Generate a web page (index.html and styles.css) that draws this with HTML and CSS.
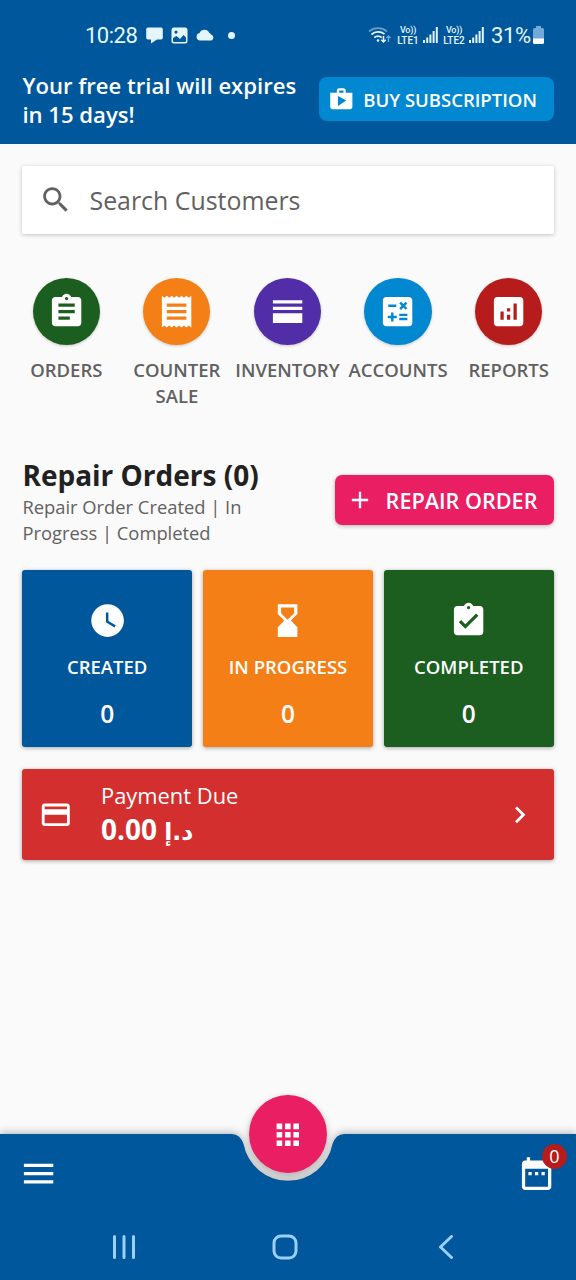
FILE: index.html
```html
<!DOCTYPE html>
<html lang="en">
<head>
<meta charset="utf-8">
<title>Repair Orders</title>
<link rel="stylesheet" href="styles.css">
</head>
<body>
<div class="screen">
  <header class="header">
    <div class="status">
      <div class="status-left">
        <span class="clock">10:28</span>
        <svg class="s-chat" width="17" height="17" viewBox="0 0 17 17"><path d="M2 .5h13a1.800 1.800 0 0 1 1.800 1.800v8.500a1.800 1.800 0 0 1-1.800 1.800h-4L5 16.500v-3.900H2A1.800 1.800 0 0 1 .2 10.800V2.300A1.800 1.800 0 0 1 2 .5z"/></svg>
        <svg class="s-photo" width="17" height="17" viewBox="0 0 17 17"><path fill-rule="evenodd" d="M3 .5h11A2.500 2.500 0 0 1 16.500 3v11a2.500 2.500 0 0 1-2.500 2.500H3A2.500 2.500 0 0 1 .5 14V3A2.500 2.500 0 0 1 3 .5zM2 11v3a1 1 0 0 0 1 1h11a1 1 0 0 0 1-1v-3.500L12.500 8 9 12 5.500 9zM5 3.500a1.600 1.600 0 1 0 0 3.200 1.600 1.600 0 0 0 0-3.200z"/></svg>
        <svg class="s-cloud" width="19" height="12" viewBox="0 0 19 12"><path d="M4 11.500a3.800 3.800 0 0 1-.4-7.500A5.300 5.300 0 0 1 13.300 4a3 3 0 0 1 1.700 1.500A3.200 3.200 0 0 1 15.500 11.500z"/></svg>
        <span class="dot"></span>
      </div>
      <div class="status-right">
        <svg class="s-wifi" width="24" height="18" viewBox="0 0 24 18" fill="none" stroke="#e4f6fb" stroke-width="1.700"><path opacity=".45" d="M1 5.500a14 14 0 0 1 18 0"/><path d="M3.500 8.500a10 10 0 0 1 13-.3M6.300 11.500a6 6 0 0 1 7.400 0"/><circle cx="10" cy="14.500" r="1.300" fill="#e4f6fb" stroke="none"/><path stroke-width="1.500" d="M15.500 10v6m-2.200-2.200 2.200 2.200 2.200-2.200"/><path stroke-width="1.400" opacity=".5" d="M20.500 16v-6m-2 2 2-2 2 2"/></svg>
        <span class="lte"><span class="vo">Vo))</span><span>LTE1</span></span>
        <svg class="bars" width="15" height="16" viewBox="0 0 15 16"><path d="M0 13h2v3H0zM3.200 10.500h2V16h-2zM6.400 7.500h2V16h-2zM9.600 4h2v12h-2zM12.800 0h2v16h-2z"/></svg>
        <span class="lte"><span class="vo">Vo))</span><span>LTE2</span></span>
        <svg class="bars" width="15" height="16" viewBox="0 0 15 16"><path d="M0 13h2v3H0zM3.200 10.500h2V16h-2zM6.400 7.500h2V16h-2zM9.600 4h2v12h-2zM12.800 0h2v16h-2z"/></svg>
        <span class="percent">31%</span>
        <svg class="battery" width="11" height="18" viewBox="0 0 11 18"><path fill="#73a9d6" d="M3 0h5v2h1.500A1.500 1.500 0 0 1 11 3.500V13H0V3.500A1.500 1.500 0 0 1 1.500 2H3z"/><path fill="#fff" d="M0 12.500h11v4A1.500 1.500 0 0 1 9.500 18h-8A1.500 1.500 0 0 1 0 16.500z"/></svg>
      </div>
    </div>
    <div class="trial">
      <p class="trial-text">Your free trial will expires<br>in 15 days!</p>
      <button class="buy"><svg width="26.600" height="26.600" viewBox="0 0 24 24"><path d="M16 6V4c0-1.110-.89-2-2-2h-4c-1.110 0-2 .89-2 2v2H2v13c0 1.110.89 2 2 2h16c1.110 0 2-.89 2-2V6h-6zm-6-2h4v2h-4V4zM9 18V9l7.500 4L9 18z"/></svg><span>BUY SUBSCRIPTION</span></button>
    </div>
  </header>

  <main class="content">
    <div class="search">
      <svg width="33.600" height="33.600" viewBox="0 0 24 24"><path d="M15.500 14h-.79l-.28-.27C15.410 12.590 16 11.110 16 9.500 16 5.910 13.090 3 9.500 3S3 5.910 3 9.500 5.910 16 9.500 16c1.610 0 3.090-.59 4.230-1.570l.27.28v.79l5 4.990L20.490 19l-4.990-5zm-6 0C7.010 14 5 11.990 5 9.500S7.010 5 9.500 5 14 7.010 14 9.500 11.990 14 9.500 14z"/></svg>
      <span>Search Customers</span>
    </div>

    <nav class="shortcuts">
      <a class="shortcut"><span class="disc green"><svg viewBox="0 0 24 24"><path d="M19 3h-4.180C14.400 1.840 13.300 1 12 1c-1.300 0-2.400.84-2.820 2H5c-1.100 0-2 .9-2 2v14c0 1.100.9 2 2 2h14c1.100 0 2-.9 2-2V5c0-1.100-.9-2-2-2zm-7 0c.55 0 1 .45 1 1s-.45 1-1 1-1-.45-1-1 .45-1 1-1zm2 14H7v-2h7v2zm3-4H7v-2h10v2zm0-4H7V7h10v2z"/></svg></span><span class="name">ORDERS</span></a>
      <a class="shortcut"><span class="disc orange"><svg viewBox="0 0 24 24"><path d="M18 17H6v-2h12v2zm0-4H6v-2h12v2zm0-4H6V7h12v2zM3 21.700l1.500-1.200L6 21.700l1.500-1.200L9 21.700l1.500-1.200L12 21.700l1.500-1.200L15 21.700l1.500-1.200L18 21.700l1.500-1.200L21 21.700V2.300l-1.500 1.200L18 2.300l-1.500 1.200L15 2.300l-1.500 1.200L12 2.300l-1.500 1.200L9 2.300 7.500 3.500 6 2.300 4.500 3.500 3 2.300z"/></svg></span><span class="name">COUNTER<br>SALE</span></a>
      <a class="shortcut"><span class="disc purple"><svg viewBox="0 0 24 24"><path d="M3 19h18v-6H3v6zm0-8h18V9H3v2zm0-6v2h18V5H3z"/></svg></span><span class="name">INVENTORY</span></a>
      <a class="shortcut"><span class="disc sky"><svg viewBox="0 0 24 24"><path d="M19 3H5c-1.100 0-2 .9-2 2v14c0 1.100.9 2 2 2h14c1.100 0 2-.9 2-2V5c0-1.100-.9-2-2-2zm-5.970 4.060L14.090 6l1.410 1.410L16.910 6l1.060 1.060-1.410 1.410 1.410 1.410-1.060 1.060-1.410-1.400-1.410 1.410-1.060-1.060 1.410-1.410-1.410-1.420zM6.250 7.720h5v1.500h-5v-1.500zM11.500 16h-2v2H8v-2H6v-1.500h2v-2h1.500v2h2V16zm6.500 1.250h-5v-1.500h5v1.500zm0-2.500h-5v-1.500h5v1.500z"/></svg></span><span class="name">ACCOUNTS</span></a>
      <a class="shortcut"><span class="disc red"><svg viewBox="0 0 24 24"><path d="M19 3H5c-1.100 0-2 .9-2 2v14c0 1.100.9 2 2 2h14c1.100 0 2-.9 2-2V5c0-1.100-.9-2-2-2zM9 17H7v-5h2v5zm4 0h-2v-3h2v3zm0-5h-2v-2h2v2zm4 5h-2V7h2v10z"/></svg></span><span class="name">REPORTS</span></a>
    </nav>

    <section class="orders-head">
      <div>
        <h1>Repair Orders (0)</h1>
        <p class="sub">Repair Order Created | In<br>Progress | Completed</p>
      </div>
      <button class="add"><svg width="28" height="28" viewBox="0 0 24 24"><path d="M19 13h-6v6h-2v-6H5v-2h6V5h2v6h6v2z"/></svg><span>REPAIR ORDER</span></button>
    </section>

    <section class="cards">
      <div class="card blue"><svg viewBox="0 0 24 24"><path d="M12 2C6.500 2 2 6.500 2 12s4.500 10 10 10 10-4.500 10-10S17.500 2 12 2zm4.200 14.200L11 13V7h1.500v5.200l4.500 2.700-.8 1.300z"/></svg><span class="label">CREATED</span><span class="count">0</span></div>
      <div class="card orange"><svg viewBox="0 0 24 24"><path d="M6 2v6h.01L6 8.010 10 12l-4 4 .01.01H6V22h12v-5.990h-.01L18 16l-4-4 4-3.990-.01-.01H18V2H6zM16 7.500 12 11.500 8 7.500V4h8z"/></svg><span class="label">IN PROGRESS</span><span class="count">0</span></div>
      <div class="card green"><svg viewBox="0 0 24 24"><path d="M19 3h-4.180C14.400 1.840 13.300 1 12 1s-2.400.84-2.820 2H5c-1.100 0-2 .9-2 2v14c0 1.100.9 2 2 2h14c1.100 0 2-.9 2-2V5c0-1.100-.9-2-2-2zm-7 0c.55 0 1 .45 1 1s-.45 1-1 1-1-.45-1-1 .45-1 1-1zm-2 14l-4-4 1.410-1.410L10 14.170l6.590-6.590L18 9l-8 8z"/></svg><span class="label">COMPLETED</span><span class="count">0</span></div>
    </section>

    <section class="due">
      <svg width="33.600" height="33.600" viewBox="0 0 24 24"><path d="M20 4H4c-1.110 0-1.990.89-1.990 2L2 18c0 1.110.89 2 2 2h16c1.110 0 2-.89 2-2V6c0-1.110-.89-2-2-2zm0 14H4v-6h16v6zm0-10H4V6h16v2z"/></svg>
      <div class="due-text">
        <span class="due-label">Payment Due</span>
        <span class="amount"><b>0.00</b> <span class="currency" dir="rtl" lang="ar">د.إ</span></span>
      </div>
      <svg width="33.600" height="33.600" viewBox="0 0 24 24"><path d="M10 6 8.590 7.410 13.170 12l-4.580 4.590L10 18l6-6z"/></svg>
    </section>
  </main>

  <footer class="bottom">
    <svg class="bar-shape" width="576" height="146" viewBox="0 0 576 146"><path d="M0 0H232Q240 0 243.500 10A45.300 45.300 0 0 0 332.500 10Q336 0 344 0H576V146H0z"/></svg>
    <button class="fab"><svg width="33.600" height="33.600" viewBox="0 0 24 24"><path d="M4 8h4V4H4v4zm6 12h4v-4h-4v4zm-6 0h4v-4H4v4zm0-6h4v-4H4v4zm6 0h4v-4h-4v4zm6-10v4h4V4h-4zm-6 4h4V4h-4v4zm6 6h4v-4h-4v4zm0 6h4v-4h-4v4z"/></svg></button>
    <div class="tools">
      <svg width="39.200" height="39.200" viewBox="0 0 24 24"><path d="M3 18h18v-2H3v2zm0-5h18v-2H3v2zm0-7v2h18V6H3z"/></svg>
      <span class="calendar">
        <svg width="39.200" height="39.200" viewBox="0 0 24 24"><path d="M9 11H7v2h2v-2zm4 0h-2v2h2v-2zm4 0h-2v2h2v-2zm2-7h-1V2h-2v2H8V2H6v2H5c-1.110 0-1.990.9-1.990 2L3 20c0 1.100.89 2 2 2h14c1.100 0 2-.9 2-2V6c0-1.100-.9-2-2-2zm0 16H5V9h14v11z"/></svg>
        <span class="badge">0</span>
      </span>
    </div>
    <div class="system">
      <svg width="24" height="24" viewBox="0 0 24 24"><path d="M2.500 1.500v21M12 1.500v21M21.500 1.500v21"/></svg>
      <svg width="26" height="26" viewBox="0 0 26 26"><rect x="2" y="2" width="22" height="22" rx="7"/></svg>
      <svg width="14" height="24" viewBox="0 0 14 24"><path d="M12.500 1.500 1.500 12l11 10.500"/></svg>
    </div>
  </footer>
</div>
</body>
</html>
```

FILE: styles.css
```css
* { box-sizing: border-box; }
body {
  margin: 0;
  background: #fafafa;
  font-family: "Open Sans", "Noto Sans", sans-serif;
}
p, h1 { margin: 0; }
svg { display: block; flex: none; fill: currentColor; }
button { border: 0; padding: 0; font: inherit; color: inherit; }

.screen { display: flex; flex-direction: column; width: 576px; height: 1280px; overflow: hidden; }
.blue { background: #01579b; }
.green { background: #1b5e20; }
.orange { background: #f57f17; }
.purple { background: #512da8; }
.sky { background: #0288d1; }
.red { background: #b71c1c; }

.header { height: 144px; background: #01579b; color: #fff; }
.status {
  display: flex; justify-content: space-between; align-items: center;
  height: 70px; padding: 0 32px 0 85px;
  color: #e4f6fb; font-family: Roboto, sans-serif;
}
.status-left, .status-right { display: flex; align-items: center; }
.clock { width: 61px; font-size: 22px; letter-spacing: -.5px; }
.s-photo { margin-left: 8px; }
.s-cloud { margin-left: 8px; }
.dot { width: 7px; height: 7px; margin-left: 13px; border-radius: 50%; background: #e4f6fb; }
.lte { display: flex; flex-direction: column; align-items: center; width: 22px; padding-top: 1px; font-size: 10px; line-height: 10.5px; font-weight: 500; }
.vo { font-size: 9px; letter-spacing: -.2px; }
.s-wifi { margin-right: 5px; fill: none; }
.bars { margin: 0 5px 0 4px; }
.percent { width: 42px; margin-left: 2px; font-size: 22px; letter-spacing: -.4px; }

.trial { display: flex; justify-content: space-between; align-items: flex-start; padding: 1px 22.4px 0; }
.trial-text { font-size: 22.1px; line-height: 29px; font-weight: 600; white-space: nowrap; }
.buy {
  display: flex; align-items: center; gap: 9px;
  width: 235px; height: 44px; margin-top: 6px; padding-left: 9px;
  border-radius: 8px; background: #0288d1;
  font-size: 18.5px; font-weight: 600; white-space: nowrap;
}

.content { flex: 1; padding: 22.4px 22.4px 0; }
.search {
  display: flex; align-items: center; gap: 17px; height: 67.2px; padding-left: 16.5px;
  background: #fff; border-radius: 2px; box-shadow: 0 1px 4px rgba(0, 0, 0, .22);
  color: #616161; font-size: 24.9px;
}
.shortcuts { display: grid; grid-template-columns: repeat(5, 110.6px); margin: 44.4px -11.4px 0; height: 131px; }
.shortcut { display: flex; flex-direction: column; align-items: center; color: #616161; }
.disc {
  display: flex; align-items: center; justify-content: center;
  width: 67.2px; height: 67.2px; border-radius: 50%; color: #fff;
  box-shadow: 0 1px 3px rgba(0, 0, 0, .2);
}
.disc svg { width: 39.2px; height: 39.2px; }
.name { margin-top: 11.5px; font-size: 18.5px; line-height: 26px; font-weight: 600; text-align: center; white-space: nowrap; }

.orders-head { display: flex; justify-content: space-between; margin-top: 46.6px; height: 114.2px; }
h1 { color: #212121; font-size: 28px; line-height: 38px; font-weight: 700; white-space: nowrap; }
.sub { color: #616161; font-size: 18.35px; line-height: 26px; white-space: nowrap; }
.add {
  display: flex; align-items: center; gap: 12px;
  width: 219px; height: 50px; margin-top: 19.5px; padding-left: 11px;
  border-radius: 7px; background: #e91e63; color: #fff;
  box-shadow: 0 1px 4px rgba(0, 0, 0, .28);
  font-size: 21.6px; font-weight: 600; white-space: nowrap;
}

.cards { display: grid; grid-template-columns: repeat(3, 1fr); gap: 11.2px; }
.card {
  display: flex; flex-direction: column; align-items: center;
  height: 177px; padding-top: 31px; border-radius: 3px; color: #fff;
  box-shadow: 0 1px 4px rgba(0, 0, 0, .35);
}
.card svg { width: 39.2px; height: 39.2px; }
.label { margin-top: 14px; font-size: 18.5px; line-height: 26px; font-weight: 600; white-space: nowrap; }
.count { margin-top: 18px; font-size: 24.5px; line-height: 32px; font-weight: 600; }

.due {
  display: flex; align-items: center; height: 91px; margin-top: 22.6px; padding: 0 17px;
  border-radius: 3px; background: #d32f2f; color: #fff; box-shadow: 0 1px 4px rgba(0, 0, 0, .35);
}
.due-text { display: flex; flex-direction: column; flex: 1; padding: 1px 0 0 28px; }
.due-label { font-size: 21.9px; line-height: 31px; }
.amount { font-size: 28px; line-height: 37px; white-space: nowrap; }
.currency { font-family: "DejaVu Sans", sans-serif; font-size: 23.5px; font-weight: 700; }

.bottom { position: relative; height: 146px; color: #fff; }
.bar-shape { position: absolute; inset: 0; fill: #01579b; overflow: visible; filter: drop-shadow(0 -1px 4px rgba(0, 0, 0, .3)); }
.fab {
  position: absolute; left: 249px; top: -39px; width: 78.4px; height: 78.4px;
  display: flex; align-items: center; justify-content: center;
  border-radius: 50%; background: #e91e63; color: #fff; box-shadow: 0 3px 7px rgba(0, 0, 0, .3);
}
.fab svg { margin-top: 1px; }
.tools { position: relative; display: flex; justify-content: space-between; padding: 20px 20px 0 19.4px; height: 78px; }
.calendar { position: relative; }
.badge {
  position: absolute; left: 25px; top: -10px; width: 25px; height: 25px;
  border-radius: 50%; background: #b71c1c; text-align: center; font-size: 18px; line-height: 25px;
}
.system { position: relative; display: flex; align-items: center; height: 70px; padding-left: 112px; color: #9ad0fb; }
.system svg { fill: none; stroke: currentColor; stroke-width: 3px; stroke-linecap: round; stroke-linejoin: round; }
.system svg:nth-child(2) { margin-left: 136px; }
.system svg:nth-child(3) { margin-left: 141px; }
```
